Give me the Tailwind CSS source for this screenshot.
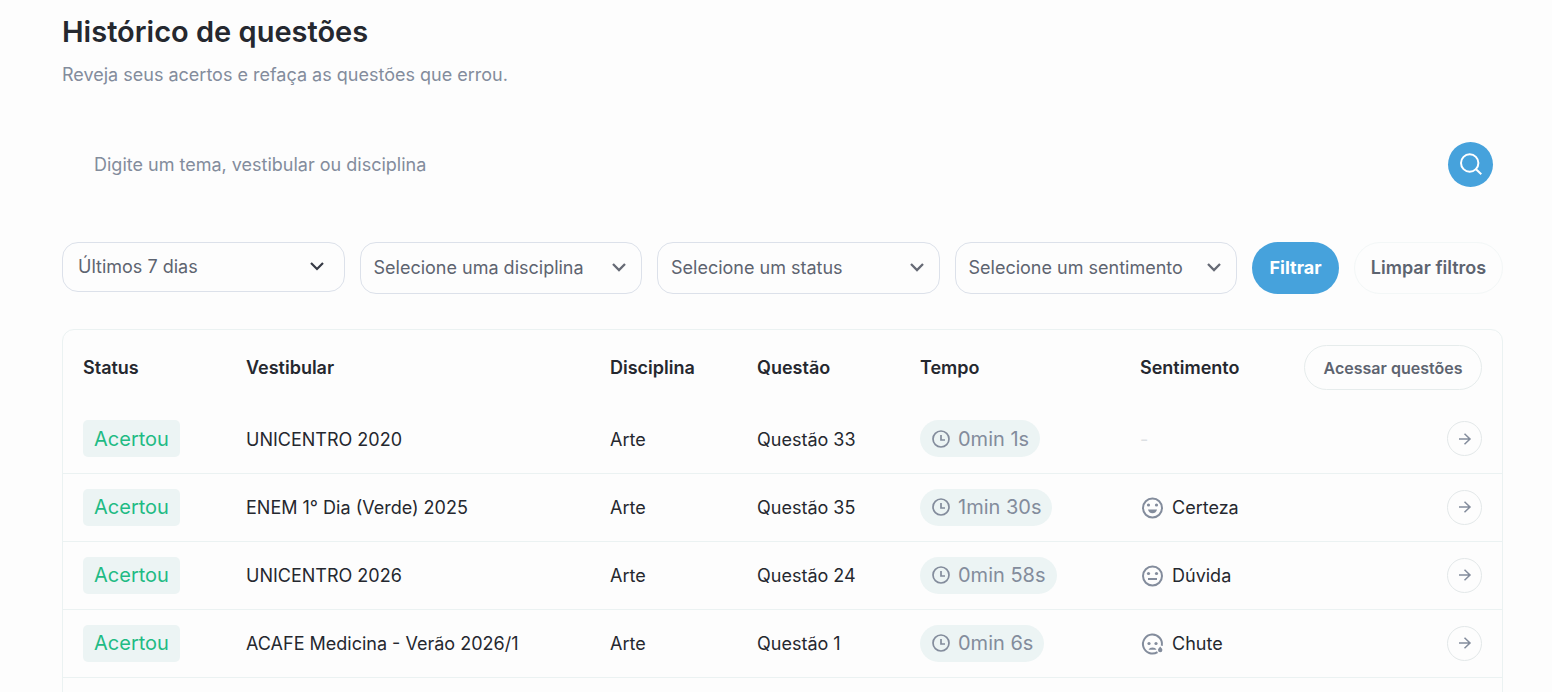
<!DOCTYPE html>
<html lang="pt-BR">
<head>
    <meta charset="UTF-8">
    <meta name="viewport" content="width=device-width, initial-scale=1.0">
    <title>Histórico de questões</title>
    <script src="https://cdn.jsdelivr.net/npm/@tailwindcss/browser@4"></script>
</head>

<body class="bg-[#fdfdfd] font-['Inter',sans-serif] text-lg text-[#25282f]">
    <main class="pl-[62px] pr-[49px] pt-3">
        <h1 class="text-[29px] leading-10 font-semibold">Histórico de questões</h1>
        <p class="mt-[9px] leading-7 text-[#838c9c]">Reveja seus acertos e refaça as questões que errou.</p>

        <form class="mt-[42px] flex items-center h-[66px] pl-8 pr-[10px]">
            <input class="flex-1 h-12 focus:outline-none placeholder:text-[#838c9c]" type="text" id="search" aria-label="Buscar" placeholder="Digite um tema, vestibular ou disciplina">
            <button type="submit" aria-label="Buscar" class="flex items-center justify-center size-[45px] rounded-full bg-[#46a2dc] text-white hover:bg-[#368fc8]">
                <svg class="size-6" viewBox="0 0 24 24" fill="none" stroke="currentColor" stroke-width="2"><circle cx="10.7" cy="11" r="8.7"/><path d="M16.500 16.800 22.300 22.300"/></svg>
            </button>
        </form>

        <div class="mt-[45px] flex items-start gap-[15px] text-[#5d6470]">
            <div class="relative flex-1">
                <select aria-label="Período" class="appearance-none w-full h-[50px] pl-[15px] pr-12 border border-[#dce1ea] rounded-2xl focus:outline-none">
                    <option>Últimos 7 dias</option>
                </select>
                <svg class="absolute right-5 top-4 size-4 pointer-events-none text-[#363a45]" viewBox="0 0 16 16" fill="none" stroke="currentColor" stroke-width="2.2"><path d="M2 5l6 6 6-6"/></svg>
            </div>
            <div class="relative flex-1">
                <select aria-label="Disciplina" class="appearance-none w-full h-[52px] pl-[13px] pr-12 border border-[#dce1ea] rounded-2xl focus:outline-none">
                    <option>Selecione uma disciplina</option>
                </select>
                <svg class="absolute right-[15px] top-[17px] size-4 pointer-events-none text-[#666a75]" viewBox="0 0 16 16" fill="none" stroke="currentColor" stroke-width="2.3"><path d="M2 5l6 6 6-6"/></svg>
            </div>
            <div class="relative flex-1">
                <select aria-label="Status" class="appearance-none w-full h-[52px] pl-[13px] pr-12 border border-[#dce1ea] rounded-2xl focus:outline-none">
                    <option>Selecione um status</option>
                </select>
                <svg class="absolute right-[15px] top-[17px] size-4 pointer-events-none text-[#666a75]" viewBox="0 0 16 16" fill="none" stroke="currentColor" stroke-width="2.3"><path d="M2 5l6 6 6-6"/></svg>
            </div>
            <div class="relative flex-1">
                <select aria-label="Sentimento" class="appearance-none w-full h-[52px] pl-[13px] pr-12 border border-[#dce1ea] rounded-2xl focus:outline-none">
                    <option>Selecione um sentimento</option>
                </select>
                <svg class="absolute right-[15px] top-[17px] size-4 pointer-events-none text-[#666a75]" viewBox="0 0 16 16" fill="none" stroke="currentColor" stroke-width="2.3"><path d="M2 5l6 6 6-6"/></svg>
            </div>
            <button class="w-[87px] h-[52px] rounded-full bg-[#46a2dc] text-white font-bold hover:bg-[#368fc8]">Filtrar</button>
            <button class="w-[149px] h-[52px] rounded-full border border-[#f3f7f7] font-semibold">Limpar filtros</button>
        </div>

        <div class="mt-[35px] pb-10 border border-[#ebf2f2] rounded-xl">
            <table class="w-full table-fixed text-left">
                <thead>
                    <tr class="h-[75px]">
                        <th class="w-[163px] pl-5 font-semibold">Status</th>
                        <th class="pl-5 font-semibold">Vestibular</th>
                        <th class="w-[147px] pl-5 font-semibold">Disciplina</th>
                        <th class="w-[163px] pl-5 font-semibold">Questão</th>
                        <th class="w-[220px] pl-5 font-semibold">Tempo</th>
                        <th class="w-[164px] pl-5 font-semibold">Sentimento</th>
                        <th class="w-[218px] px-5">
                            <button class="block w-full h-[45px] rounded-full border border-[#e6ecec] text-base font-semibold text-[#5d6470]">Acessar questões</button>
                        </th>
                    </tr>
                </thead>
                <tbody id="question-list"></tbody>
            </table>
        </div>
    </main>

    <script>
        const questionList = document.getElementById('question-list');

        const questions = [
            { exam: 'UNICENTRO 2020', subject: 'Arte', number: 33, time: '0min 1s', feeling: null },
            { exam: 'ENEM 1° Dia (Verde) 2025', subject: 'Arte', number: 35, time: '1min 30s', feeling: 'Certeza' },
            { exam: 'UNICENTRO 2026', subject: 'Arte', number: 24, time: '0min 58s', feeling: 'Dúvida' },
            { exam: 'ACAFE Medicina - Verão 2026/1', subject: 'Arte', number: 1, time: '0min 6s', feeling: 'Chute' }
        ];

        // Face drawn next to each feeling
        const faces = {
            'Certeza': '<circle cx="12.500" cy="12" r="9.500"/><circle cx="8.500" cy="9" r="1.600" fill="currentColor" stroke="none"/><circle cx="16.500" cy="9" r="1.600" fill="currentColor" stroke="none"/><path d="M8 13.500h9a4.600 4.600 0 0 1-9 0z" fill="currentColor" stroke="none"/>',
            'Dúvida': '<circle cx="12.500" cy="12" r="9.500"/><circle cx="8.500" cy="9.500" r="1.600" fill="currentColor" stroke="none"/><circle cx="16.500" cy="9.500" r="1.600" fill="currentColor" stroke="none"/><path d="M8 15h9"/>',
            'Chute': '<path d="M21.800 13.800A9.500 9.500 0 1 0 17.500 20.100"/><circle cx="9" cy="11.500" r="1.600" fill="currentColor" stroke="none"/><circle cx="16" cy="11.500" r="1.600" fill="currentColor" stroke="none"/><path d="M8.500 17.800a4.200 3.400 0 0 1 8 0z" fill="currentColor" stroke="none"/><path d="M20.200 14.500c1.500 1.800 2.200 2.600 2.200 3.500a2.200 2.200 0 0 1-4.400 0c0-.9.700-1.700 2.200-3.500z" fill="currentColor" stroke="none"/>'
        };

        function feelingCell(feeling) {
            if (!feeling) return '<span class="text-[#dce0e3]">-</span>';
            return `
                <span class="flex items-center gap-2">
                    <svg class="size-6 text-[#838c9c]" viewBox="0 0 24 24" fill="none" stroke="currentColor" stroke-width="2">${faces[feeling]}</svg>
                    ${feeling}
                </span>`;
        }

        questions.forEach(q => {
            const tr = document.createElement('tr');
            tr.className = 'h-[68px] border-b border-[#ebf2f2]';
            tr.innerHTML = `
                <td class="pl-5"><span class="inline-flex items-center h-[37px] px-[11px] rounded-[5px] bg-[#ecf4f4] text-xl text-[#1fbb84]">Acertou</span></td>
                <td class="pl-5 pt-[2px]">${q.exam}</td>
                <td class="pl-5 pt-[2px]">${q.subject}</td>
                <td class="pl-5 pt-[2px]">Questão ${q.number}</td>
                <td class="pl-5">
                    <span class="inline-flex items-center gap-[7px] h-[37px] px-[11px] rounded-full bg-[#ecf4f4] text-xl text-[#838c9c]">
                        <svg class="size-5" viewBox="0 0 20 20" fill="none" stroke="currentColor" stroke-width="1.7"><circle cx="10" cy="10" r="8"/><path d="M10 6v5h4"/></svg>
                        ${q.time}
                    </span>
                </td>
                <td class="pl-5 pt-[2px]">${feelingCell(q.feeling)}</td>
                <td class="px-5">
                    <button aria-label="Ver questão ${q.number}" class="flex items-center justify-center ml-auto size-[35px] rounded-full border border-[#e3e8e9] text-[#838c9c]">
                        <svg class="size-4" viewBox="0 0 16 16" fill="none" stroke="currentColor" stroke-width="1.500"><path d="M2 8h11M7.500 2.800 13 8l-5.500 5.200"/></svg>
                    </button>
                </td>
            `;
            questionList.appendChild(tr);
        });
    </script>
</body>
</html>
